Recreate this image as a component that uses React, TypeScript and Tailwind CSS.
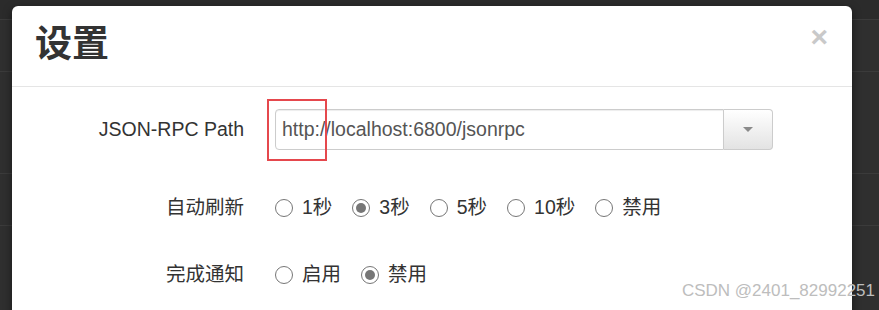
import React from "react";

const font = { fontFamily: '"Liberation Sans", "Noto Sans CJK SC", sans-serif' };

function Radio({ checked, label }: { checked?: boolean; label: string }) {
  return (
    <label className="flex items-center gap-[9px]">
      <span className="flex h-[18px] w-[18px] items-center justify-center rounded-full border-[1.5px] border-[#767676] bg-white">
        {checked && <span className="h-[10px] w-[10px] rounded-full bg-[#767676]" />}
      </span>
      <span>{label}</span>
    </label>
  );
}

function Row({ label, children, className }: { label: string; children: React.ReactNode; className?: string }) {
  return (
    <div className={"flex items-center " + (className ?? "")}>
      <div className="w-[232px] text-right">{label}</div>
      <div className="ml-[31px] flex items-center">{children}</div>
    </div>
  );
}

export default function App() {
  return (
    <div className="relative h-[310px] w-[879px] overflow-hidden bg-[#2f2f2f]" style={font}>
      {/* table rows behind the backdrop */}
      <div className="flex flex-col">
        <div className="h-[20px] border-b border-[#3b3b3b] bg-[#2b2b2b]" />
        <div className="h-[52px] border-b border-[#3b3b3b]" />
        <div className="h-[102px] border-b border-[#3b3b3b]" />
        <div className="h-[52px] border-b border-[#3b3b3b]" />
      </div>

      <div className="absolute left-[12px] top-[6px] h-[400px] w-[840px] rounded-[6px] bg-white text-[19.5px] text-[#333] shadow-[0_3px_9px_rgba(0,0,0,0.5)]">
        <div className="flex h-[81px] items-start justify-between border-b border-[#e5e5e5] pl-[23px] pr-[24px] pt-[18px]">
          <h4 className="text-[37px] font-bold leading-[42px] text-[#333]">设置</h4>
          <button className="mt-[-2px] text-[30px] font-bold leading-[30px] text-[#c9c9c9]">×</button>
        </div>

        <div className="pt-[22px]">
          <Row label="JSON-RPC Path" className="h-[41px]">
            <div className="flex h-[41px]">
              <div className="flex h-[41px] w-[449px] items-center rounded-l-[4px] border border-[#ccc] pl-[6px] text-[#555] shadow-[inset_0_1px_1px_rgba(0,0,0,0.075)]">
                http://localhost:6800/jsonrpc
              </div>
              <div className="flex h-[41px] w-[49px] items-center justify-center rounded-r-[4px] border border-l-0 border-[#ccc] bg-gradient-to-b from-white to-[#e3e3e3]">
                <span className="h-0 w-0 border-x-[5px] border-t-[5px] border-x-transparent border-t-[#8a8a8a]" />
              </div>
            </div>
          </Row>

          <Row label="自动刷新" className="mt-[41px] h-[34px]">
            <div className="flex items-center gap-[20px]">
              <Radio label="1秒" />
              <Radio checked label="3秒" />
              <Radio label="5秒" />
              <Radio label="10秒" />
              <Radio label="禁用" />
            </div>
          </Row>

          <Row label="完成通知" className="mt-[33px] h-[34px]">
            <div className="flex items-center gap-[20px]">
              <Radio label="启用" />
              <Radio checked label="禁用" />
            </div>
          </Row>
        </div>
      </div>

      {/* annotation box */}
      <div className="absolute left-[267px] top-[99px] h-[62px] w-[60px] border-2 border-[#e5484d]" />

      <div className="absolute bottom-[7px] right-[4px] text-[17px] text-[#bdbdbd]">CSDN @2401_82992251</div>
    </div>
  );
}
